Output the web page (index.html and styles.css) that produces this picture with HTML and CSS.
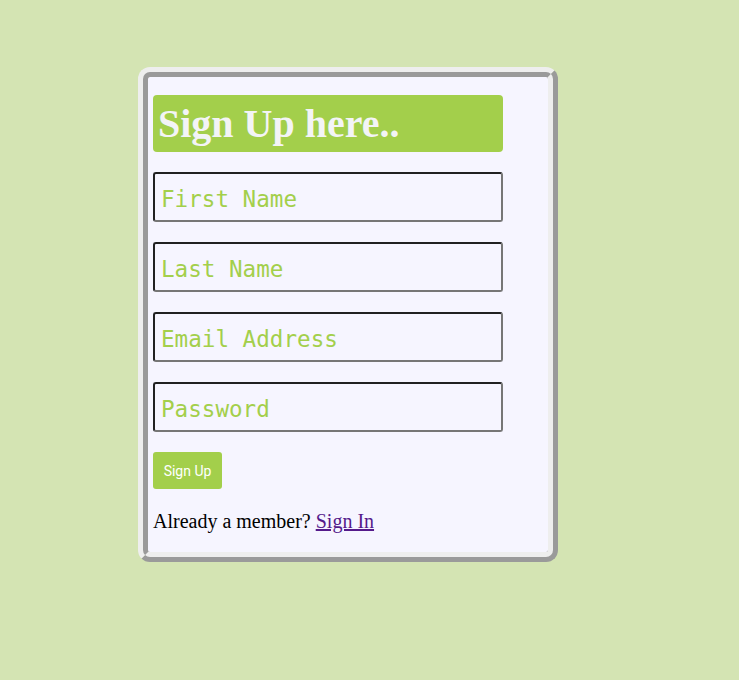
FILE: index.html
```html
<!DOCTYPE html>
<html>
<head>
<meta charset="utf-8">
<title>Sign Up</title>
<link rel="stylesheet" href="styles.css">
</head>
<body>
<div class="card">
  <form class="form">
    <h1 class="title">Sign Up here..</h1>
    <input class="field" type="text" placeholder="First Name">
    <input class="field" type="text" placeholder="Last Name">
    <input class="field" type="email" placeholder="Email Address">
    <input class="field" type="password" placeholder="Password">
    <button class="btn" type="button">Sign Up</button>
    <p class="member">Already a member? <a class="link" href="#">Sign In</a></p>
  </form>
</div>
</body>
</html>
```
FILE: styles.css
```css
html, body {
  margin: 0;
  padding: 0;
}
body {
  background: #d4e4b3;
  font-family: "Liberation Serif", "Times New Roman", serif;
  min-height: 680px;
}
.card {
  box-sizing: border-box;
  width: 420px;
  height: 495px;
  margin: 67px 0 0 138px;
  border: 10px ridge #eeeeee;
  border-radius: 12px;
  background: #f6f5ff;
  padding: 18px 5px 0 5px;
}
.form {
  display: flex;
  flex-direction: column;
  align-items: flex-start;
}
.title {
  box-sizing: border-box;
  width: 350px;
  margin: 0 0 20px 0;
  padding: 5px;
  background: #a3cf4b;
  color: #f3f4f6;
  font-size: 40px;
  font-weight: bold;
  line-height: 47px;
  border-radius: 4px;
}
.field {
  box-sizing: border-box;
  width: 350px;
  height: 50px;
  margin: 0 0 20px 0;
  padding: 3px 6px 0 6px;
  border: 2px inset #767676;
  border-radius: 3px;
  background: transparent;
  font-family: "DejaVu Sans Mono", monospace;
  font-size: 22.6px;
  color: #333;
  outline: none;
}
.field::placeholder {
  color: #a3cf4b;
  opacity: 1;
}
.btn {
  box-sizing: border-box;
  margin: 0;
  width: 69px;
  height: 37px;
  padding: 0;
  border: none;
  border-radius: 3px;
  background: #a3cf4b;
  color: #ffffff;
  font-family: Roboto, "Liberation Sans", Arial, sans-serif;
  font-size: 14px;
  font-weight: 400;
}
.member {
  margin: 21px 0 0 0;
  font-size: 20px;
  line-height: 22px;
  color: #000;
}
.link {
  color: #551a8b;
}
```
